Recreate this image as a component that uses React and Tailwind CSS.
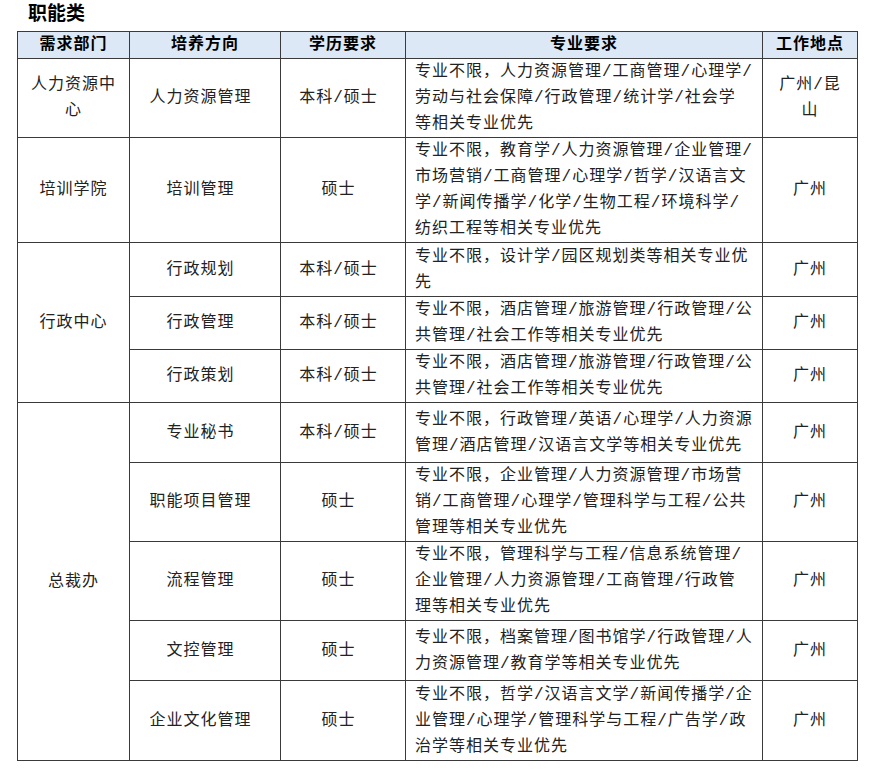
const rows = [
  {
    dept: ["人力资源中", "心"],
    deptSpan: 1,
    dir: "人力资源管理",
    edu: "本科/硕士",
    major: ["专业不限，人力资源管理/工商管理/心理学/", "劳动与社会保障/行政管理/统计学/社会学", "等相关专业优先"],
    place: ["广州/昆", "山"],
    h: "h-[78px]",
  },
  {
    dept: ["培训学院"],
    deptSpan: 1,
    dir: "培训管理",
    edu: "硕士",
    major: ["专业不限，教育学/人力资源管理/企业管理/", "市场营销/工商管理/心理学/哲学/汉语言文", "学/新闻传播学/化学/生物工程/环境科学/", "纺织工程等相关专业优先"],
    place: ["广州"],
    h: "h-[104px]",
  },
  {
    dept: ["行政中心"],
    deptSpan: 3,
    dir: "行政规划",
    edu: "本科/硕士",
    major: ["专业不限，设计学/园区规划类等相关专业优", "先"],
    place: ["广州"],
    h: "h-[54px]",
  },
  {
    dir: "行政管理",
    edu: "本科/硕士",
    major: ["专业不限，酒店管理/旅游管理/行政管理/公", "共管理/社会工作等相关专业优先"],
    place: ["广州"],
    h: "h-[53px]",
  },
  {
    dir: "行政策划",
    edu: "本科/硕士",
    major: ["专业不限，酒店管理/旅游管理/行政管理/公", "共管理/社会工作等相关专业优先"],
    place: ["广州"],
    h: "h-[53px]",
  },
  {
    dept: ["总裁办"],
    deptSpan: 5,
    dir: "专业秘书",
    edu: "本科/硕士",
    major: ["专业不限，行政管理/英语/心理学/人力资源", "管理/酒店管理/汉语言文学等相关专业优先"],
    place: ["广州"],
    h: "h-[60px]",
  },
  {
    dir: "职能项目管理",
    edu: "硕士",
    major: ["专业不限，企业管理/人力资源管理/市场营", "销/工商管理/心理学/管理科学与工程/公共", "管理等相关专业优先"],
    place: ["广州"],
    h: "h-[79px]",
  },
  {
    dir: "流程管理",
    edu: "硕士",
    major: ["专业不限，管理科学与工程/信息系统管理/", "企业管理/人力资源管理/工商管理/行政管", "理等相关专业优先"],
    place: ["广州"],
    h: "h-[79px]",
  },
  {
    dir: "文控管理",
    edu: "硕士",
    major: ["专业不限，档案管理/图书馆学/行政管理/人", "力资源管理/教育学等相关专业优先"],
    place: ["广州"],
    h: "h-[60px]",
  },
  {
    dir: "企业文化管理",
    edu: "硕士",
    major: ["专业不限，哲学/汉语言文学/新闻传播学/企", "业管理/心理学/管理科学与工程/广告学/政", "治学等相关专业优先"],
    place: ["广州"],
    h: "h-[80px]",
  },
];

const cell = "border border-[#3a3a3a] align-middle";

function Lines({ items }) {
  return items.map((t, i) => (
    <div key={i} className="whitespace-nowrap">
      {t}
    </div>
  ));
}

export default function App() {
  return (
    <div
      className="min-h-screen bg-white text-[#222]"
      style={{ fontFamily: '"Liberation Mono", "Noto Sans CJK SC", monospace' }}
    >
      <div className="h-[31px] pl-[28px] text-[19px] font-bold leading-[31px] text-black">职能类</div>
      <div className="pl-[17px]">
        <table className="w-[840px] table-fixed border-collapse border border-[#222] text-[16px] leading-[26px] tracking-[1px]">
          <colgroup>
            <col className="w-[112px]" />
            <col className="w-[151px]" />
            <col className="w-[125px]" />
            <col className="w-[357px]" />
            <col className="w-[95px]" />
          </colgroup>
          <thead>
            <tr className="h-[27px] bg-[#dce8f5] font-bold text-black">
              <th className={cell}>需求部门</th>
              <th className={cell}>培养方向</th>
              <th className={cell}>学历要求</th>
              <th className={cell}>专业要求</th>
              <th className={cell}>工作地点</th>
            </tr>
          </thead>
          <tbody>
            {rows.map((r, i) => (
              <tr key={i} className={r.h}>
                {r.dept && (
                  <td rowSpan={r.deptSpan} className={`${cell} text-center`}>
                    <Lines items={r.dept} />
                  </td>
                )}
                <td className={`${cell} pr-[9px] text-center`}>{r.dir}</td>
                <td className={`${cell} pr-[9px] text-center`}>{r.edu}</td>
                <td className={`${cell} pl-[9px] text-left`}>
                  <Lines items={r.major} />
                </td>
                <td className={`${cell} text-center`}>
                  <Lines items={r.place} />
                </td>
              </tr>
            ))}
          </tbody>
        </table>
      </div>
    </div>
  );
}
